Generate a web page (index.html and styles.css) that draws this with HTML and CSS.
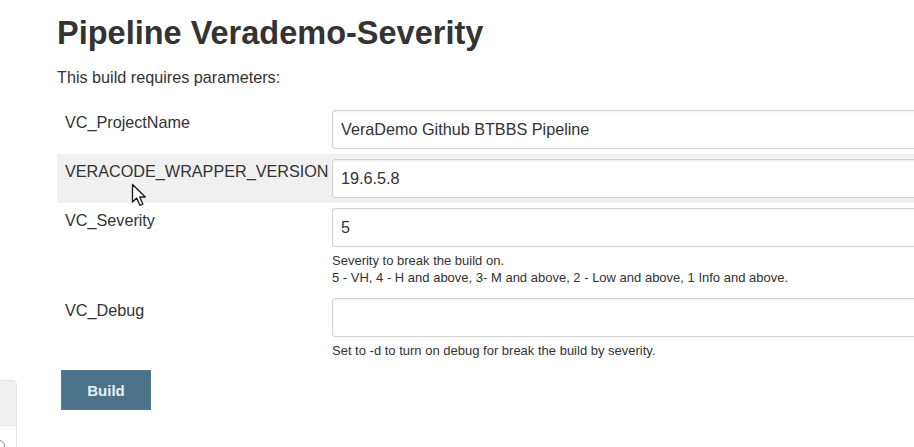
FILE: index.html
```html
<!DOCTYPE html>
<html lang="en">
<head>
<meta charset="utf-8">
<title>Pipeline Verademo-Severity</title>
<link rel="stylesheet" href="styles.css">
</head>
<body>
<div class="page">
  <aside class="side">
    <div class="side-box">
      <div class="side-head"></div>
      <div class="side-body"><span class="side-ring"></span></div>
    </div>
  </aside>
  <main class="main">
    <h1 class="title">Pipeline Verademo-Severity</h1>
    <p class="intro">This build requires parameters:</p>
    <form class="params">
      <div class="param">
        <div class="row">
          <div class="label">VC_ProjectName</div>
          <div class="field"><input class="input" type="text" value="VeraDemo Github BTBBS Pipeline"></div>
        </div>
      </div>
      <div class="param">
        <div class="row row-hover">
          <div class="label">VERACODE_WRAPPER_VERSION</div>
          <div class="field"><input class="input" type="text" value="19.6.5.8"></div>
        </div>
      </div>
      <div class="param">
        <div class="row">
          <div class="label">VC_Severity</div>
          <div class="field"><input class="input" type="text" value="5"></div>
        </div>
        <div class="desc">Severity to break the build on.<br>5 - VH, 4 - H and above, 3- M and above, 2 - Low and above, 1 Info and above.</div>
      </div>
      <div class="param">
        <div class="row">
          <div class="label">VC_Debug</div>
          <div class="field"><input class="input" type="text" value=""></div>
        </div>
        <div class="desc">Set to -d to turn on debug for break the build by severity.</div>
      </div>
      <div class="actions">
        <button class="build-btn" type="button">Build</button>
      </div>
    </form>
  </main>
</div>
<svg class="cursor" width="18" height="25" viewBox="0 0 18 25" aria-hidden="true">
  <path d="M1.5 1.5 L1.5 19 L5.7 15 L9 22.5 L11.9 21.2 L8.7 14 L14.3 14 Z" fill="#fff" stroke="#1a1a1a" stroke-width="1.3" stroke-linejoin="round"/>
</svg>
</body>
</html>
```
FILE: styles.css
```css
html, body {
  margin: 0;
  padding: 0;
}
body {
  width: 914px;
  height: 447px;
  overflow: hidden;
  position: relative;
  background: #ffffff;
  color: #333333;
  font-family: "Liberation Sans", Arial, Helvetica, sans-serif;
  font-size: 16.2px;
}
.page {
  display: flex;
  align-items: flex-start;
}
.side {
  flex: none;
  width: 17px;
}
.side-box {
  margin-top: 380px;
  height: 80px;
  border: 1px solid #e4e4e4;
  border-left: none;
  border-radius: 0 5px 0 0;
  overflow: hidden;
  box-sizing: border-box;
}
.side-head {
  height: 44px;
  background: #f1f1f1;
  border-bottom: 1px solid #e6e6e6;
}
.side-body {
  height: 35px;
  background: #ffffff;
}
.side-ring {
  display: block;
  width: 10px;
  height: 10px;
  margin: 14px 0 0 -7px;
  border: 1.5px solid #8a8a8a;
  border-radius: 50%;
}
.main {
  flex: none;
  width: 1000px;
  padding-left: 40px;
}
.title {
  margin: 15px 0 0 0;
  font-size: 32.5px;
  line-height: 37px;
  font-weight: bold;
  color: #333333;
}
.intro {
  margin: 16px 0 18px 0;
  font-size: 16.2px;
  line-height: 19px;
}
.params {
  margin: 0;
}
.row {
  display: grid;
  grid-template-columns: 275px 1fr;
}
.row-hover {
  background: #f0f0f0;
}
.label {
  padding: 8px 0 8px 8px;
  line-height: 19px;
  white-space: nowrap;
}
.field {
  padding: 5px 0;
}
.input {
  display: block;
  box-sizing: border-box;
  width: 100%;
  height: 39px;
  margin: 0;
  padding: 0 8px;
  border: 1px solid #d2d2d2;
  border-radius: 3px;
  box-shadow: inset 0 1px 2px rgba(0, 0, 0, 0.08);
  background: #ffffff;
  color: #333333;
  font-family: "Liberation Sans", Arial, Helvetica, sans-serif;
  font-size: 16.2px;
}
.desc {
  margin-left: 275px;
  padding-bottom: 7px;
  font-size: 13px;
  line-height: 17px;
  color: #333333;
}
.actions {
  padding: 4px 0 0 4px;
}
.build-btn {
  display: block;
  width: 90px;
  height: 40px;
  margin: 0;
  border: 1px solid #56798e;
  background: #4b7289;
  color: #e9eff2;
  font-family: "Liberation Sans", Arial, Helvetica, sans-serif;
  font-size: 15px;
  font-weight: bold;
  cursor: pointer;
}
.cursor {
  position: absolute;
  left: 131px;
  top: 183px;
}
```
